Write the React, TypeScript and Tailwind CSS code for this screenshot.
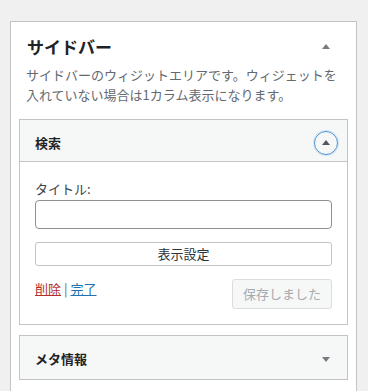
import React from "react";

const font = { fontFamily: '"Noto Sans CJK JP", "Noto Sans", sans-serif' };

function TriUp({ color = "#787c82" }: { color?: string }) {
  return (
    <svg width="8" height="5" viewBox="0 0 8 5">
      <polygon points="4,0 8,5 0,5" fill={color} />
    </svg>
  );
}
function TriDown({ color = "#787c82" }: { color?: string }) {
  return (
    <svg width="8" height="5" viewBox="0 0 8 5">
      <polygon points="0,0 8,0 4,5" fill={color} />
    </svg>
  );
}

export default function App() {
  return (
    <div
      className="w-[368px] h-[391px] overflow-hidden bg-[#f0f0f1] pt-[21px] pl-[10px]"
      style={font}
    >
      <div className="w-[347px] h-[400px] border border-[#c3c4c7] bg-white px-[8px] pt-[6px]">
        <div className="flex h-[36px] items-center justify-between">
          <div className="pl-[8px] text-[17px] font-bold leading-none text-[#1d2327]">
            サイドバー
          </div>
          <div className="flex w-[44px] justify-center">
            <TriUp />
          </div>
        </div>
        <div className="mt-[1px] whitespace-nowrap pl-[7px] text-[13px] leading-[19.5px] text-[#646970]">
          サイドバーのウィジットエリアです。ウィジェットを
          <br />
          入れていない場合は1カラム表示になります。
        </div>

        <div className="mt-[15px] border border-[#c3c4c7]">
          <div className="flex h-[42px] items-center justify-between border-b border-[#c3c4c7] bg-[#f6f7f7] pt-[4px]">
            <div className="pl-[15px] text-[13px] font-semibold text-[#1d2327]">
              検索
            </div>
            <div className="mr-[9px] flex h-[24px] w-[24px] items-center justify-center rounded-full border border-[#4f94d4] shadow-[0_0_0_1px_rgba(114,174,230,0.25)]">
              <span className="mt-[-1px] flex">
                <TriUp color="#50575e" />
              </span>
            </div>
          </div>
          <div className="px-[15px] pt-[17px] pb-[15px]">
            <div className="text-[13px] leading-[20px] text-[#3c434a]">タイトル:</div>
            <div className="mt-[1px] h-[29px] w-full rounded-[4px] border border-[#8c8f94] bg-white" />
            <div className="mt-[13px] flex h-[24px] w-full items-center justify-center rounded-[3px] border border-[#c3c4c7] bg-white text-[13px] text-[#2c3338]">
              表示設定
            </div>
            <div className="mt-[13px] flex items-start justify-between">
              <div className="text-[13px] leading-[20px]">
                <span className="text-[#b32d2e] underline">削除</span>
                <span className="mx-[3px] text-[#646970]">|</span>
                <span className="text-[#2271b1] underline">完了</span>
              </div>
              <div className="flex h-[30px] w-[100px] items-center justify-center rounded-[3px] border border-[#dcdcde] bg-[#f6f7f7] text-[13px] text-[#a7aaad]">
                保存しました
              </div>
            </div>
          </div>
        </div>

        <div className="mt-[10px] flex h-[45px] items-center justify-between border border-[#c3c4c7] bg-[#f6f7f7] pt-[3px]">
          <div className="pl-[15px] text-[13px] font-bold text-[#1d2327]">
            メタ情報
          </div>
          <div className="mr-[17px] flex">
            <TriDown />
          </div>
        </div>
      </div>
    </div>
  );
}
